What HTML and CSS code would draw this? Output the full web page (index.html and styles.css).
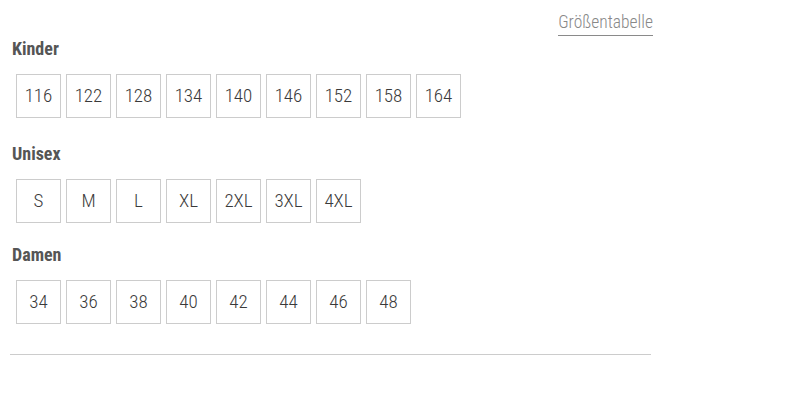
FILE: index.html
```html
<!DOCTYPE html>
<html lang="de">
<head>
<meta charset="utf-8">
<title>Größen</title>
<link rel="stylesheet" href="styles.css">
</head>
<body>
<div class="page">
  <div class="header">
    <a class="size-chart" href="#">Größentabelle</a>
  </div>

  <section class="group group--kids">
    <h3 class="group-title">Kinder</h3>
    <div class="sizes">
      <span class="size">116</span><span class="size">122</span><span class="size">128</span><span class="size">134</span><span class="size">140</span><span class="size">146</span><span class="size">152</span><span class="size">158</span><span class="size">164</span>
    </div>
  </section>

  <section class="group">
    <h3 class="group-title">Unisex</h3>
    <div class="sizes">
      <span class="size">S</span><span class="size">M</span><span class="size">L</span><span class="size">XL</span><span class="size">2XL</span><span class="size">3XL</span><span class="size">4XL</span>
    </div>
  </section>

  <section class="group group--last">
    <h3 class="group-title">Damen</h3>
    <div class="sizes">
      <span class="size">34</span><span class="size">36</span><span class="size">38</span><span class="size">40</span><span class="size">42</span><span class="size">44</span><span class="size">46</span><span class="size">48</span>
    </div>
  </section>

  <div class="divider"></div>
</div>
</body>
</html>
```

FILE: styles.css
```css
* { box-sizing: border-box; }

html, body {
  margin: 0;
  padding: 0;
  background: #fff;
}

body {
  font-family: "Roboto Condensed", "Liberation Sans Narrow", Roboto, "Liberation Sans", sans-serif;
  color: #555;
}

.page {
  width: 651px;
  padding-left: 10px;
}

.header {
  display: flex;
  justify-content: flex-end;
  margin-top: 12px;
  margin-right: -2px;
}

.size-chart {
  font-size: 17.5px;
  line-height: 21px;
  font-weight: 300;
  color: #888;
  text-decoration: none;
  padding-bottom: 2px;
  border-bottom: 1px solid #8a8a8a;
}

.group {
  margin-bottom: 21px;
}

.group--kids {
  margin-bottom: 25px;
}

.group--last {
  margin-bottom: 30px;
}

.group-title {
  margin: 2px 0 14px 2px;
  font-size: 18px;
  line-height: 22px;
  font-weight: bold;
  color: #555;
}

.sizes {
  display: flex;
  gap: 5px;
  padding-left: 6px;
}

.size {
  display: flex;
  align-items: center;
  justify-content: center;
  width: 45px;
  height: 44px;
  border: 1px solid #ccc;
  font-size: 19px;
  font-weight: 300;
  color: #3a3a3a;
  padding-bottom: 2px;
}

.divider {
  border-top: 1px solid #ccc;
}
```
